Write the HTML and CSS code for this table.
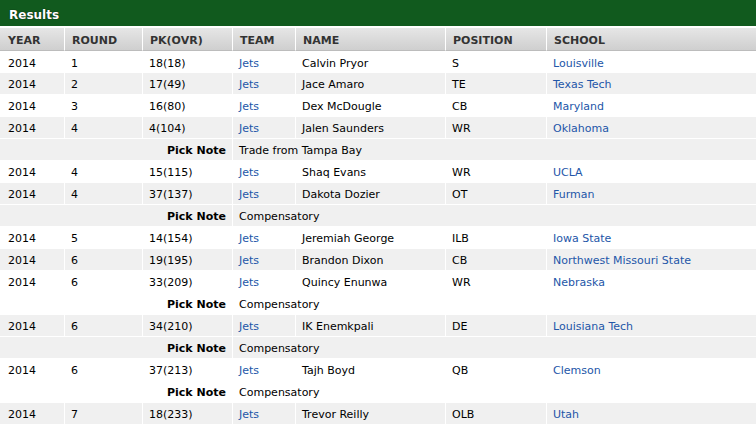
FILE: index.html
```html
<!DOCTYPE html>
<html>
<head>
<meta charset="utf-8">
<link rel="stylesheet" href="styles.css">
</head>
<body>
<div class="results">
  <div class="bar">Results</div>
  <table class="draft">
    <colgroup>
      <col class="c-year"><col class="c-round"><col class="c-pk"><col class="c-team"><col class="c-name"><col class="c-pos"><col class="c-school">
    </colgroup>
    <thead>
      <tr><th>Year</th><th>Round</th><th>Pk(Ovr)</th><th>Team</th><th>Name</th><th>Position</th><th>School</th></tr>
    </thead>
    <tbody>
      <tr><td>2014</td><td>1</td><td>18(18)</td><td><a>Jets</a></td><td>Calvin Pryor</td><td>S</td><td><a>Louisville</a></td></tr>
      <tr class="alt"><td>2014</td><td>2</td><td>17(49)</td><td><a>Jets</a></td><td>Jace Amaro</td><td>TE</td><td><a>Texas Tech</a></td></tr>
      <tr><td>2014</td><td>3</td><td>16(80)</td><td><a>Jets</a></td><td>Dex McDougle</td><td>CB</td><td><a>Maryland</a></td></tr>
      <tr class="alt"><td>2014</td><td>4</td><td>4(104)</td><td><a>Jets</a></td><td>Jalen Saunders</td><td>WR</td><td><a>Oklahoma</a></td></tr>
      <tr class="alt note"><td colspan="3" class="lbl">Pick Note</td><td colspan="4">Trade from Tampa Bay</td></tr>
      <tr><td>2014</td><td>4</td><td>15(115)</td><td><a>Jets</a></td><td>Shaq Evans</td><td>WR</td><td><a>UCLA</a></td></tr>
      <tr class="alt"><td>2014</td><td>4</td><td>37(137)</td><td><a>Jets</a></td><td>Dakota Dozier</td><td>OT</td><td><a>Furman</a></td></tr>
      <tr class="alt note"><td colspan="3" class="lbl">Pick Note</td><td colspan="4">Compensatory</td></tr>
      <tr><td>2014</td><td>5</td><td>14(154)</td><td><a>Jets</a></td><td>Jeremiah George</td><td>ILB</td><td><a>Iowa State</a></td></tr>
      <tr class="alt"><td>2014</td><td>6</td><td>19(195)</td><td><a>Jets</a></td><td>Brandon Dixon</td><td>CB</td><td><a>Northwest Missouri State</a></td></tr>
      <tr><td>2014</td><td>6</td><td>33(209)</td><td><a>Jets</a></td><td>Quincy Enunwa</td><td>WR</td><td><a>Nebraska</a></td></tr>
      <tr class="note"><td colspan="3" class="lbl">Pick Note</td><td colspan="4">Compensatory</td></tr>
      <tr class="alt"><td>2014</td><td>6</td><td>34(210)</td><td><a>Jets</a></td><td>IK Enemkpali</td><td>DE</td><td><a>Louisiana Tech</a></td></tr>
      <tr class="alt note"><td colspan="3" class="lbl">Pick Note</td><td colspan="4">Compensatory</td></tr>
      <tr><td>2014</td><td>6</td><td>37(213)</td><td><a>Jets</a></td><td>Tajh Boyd</td><td>QB</td><td><a>Clemson</a></td></tr>
      <tr class="note"><td colspan="3" class="lbl">Pick Note</td><td colspan="4">Compensatory</td></tr>
      <tr class="alt"><td>2014</td><td>7</td><td>18(233)</td><td><a>Jets</a></td><td>Trevor Reilly</td><td>OLB</td><td><a>Utah</a></td></tr>
    </tbody>
  </table>
</div>
</body>
</html>
```

FILE: styles.css
```css
html, body {
  margin: 0;
  padding: 0;
  background: #fff;
}
body {
  font-family: "DejaVu Sans", Verdana, sans-serif;
  font-size: 11px;
  color: #000;
}
.results {
  width: 756px;
}
.bar {
  height: 26px;
  box-sizing: border-box;
  background: #115a1e;
  color: #fff;
  font-weight: bold;
  font-size: 12px;
  line-height: 26px;
  padding: 2px 0 0 9px;
  text-shadow: 0 0 1px #000;
  margin-bottom: 2px;
}
.draft {
  width: 756px;
  table-layout: fixed;
  border-collapse: separate;
  border-spacing: 0;
}
.c-year { width: 64px; }
.c-round { width: 78px; }
.c-pk { width: 90px; }
.c-team { width: 63px; }
.c-name { width: 150px; }
.c-pos { width: 101px; }
.c-school { width: 210px; }
.draft th {
  height: 23px;
  box-sizing: border-box;
  padding: 2px 6px 0 7px;
  text-align: left;
  text-transform: uppercase;
  font-weight: bold;
  color: #333;
  background: linear-gradient(#e6e6e6, #cfcfcf);
  border-left: 1px solid #fff;
  border-bottom: 1px solid #bcbcbc;
  white-space: nowrap;
}
.draft th:first-child,
.draft td:first-child {
  border-left: 0;
  padding-left: 8px;
}
.draft tbody tr:first-child td {
  border-top: 1px solid #fff;
}
.draft td {
  height: 22px;
  box-sizing: border-box;
  padding: 2px 6px 0;
  border-left: 1px solid #fff;
  border-bottom: 1px solid #fff;
  white-space: nowrap;
  overflow: hidden;
}
.draft tr.alt td {
  background: #f0f0f0;
}
.draft a {
  color: #2356a8;
  text-decoration: none;
}
.draft td.lbl {
  text-align: right;
  font-weight: bold;
}
```
